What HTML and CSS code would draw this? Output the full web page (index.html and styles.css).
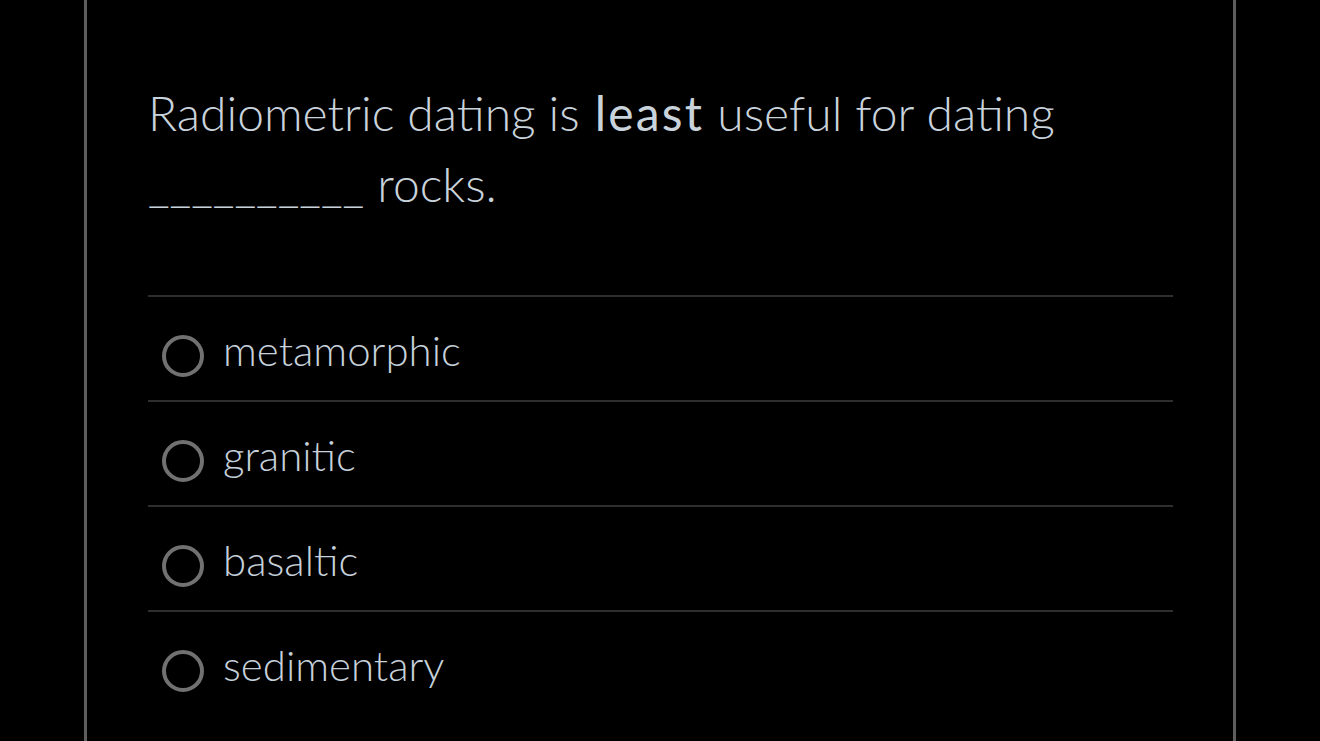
FILE: index.html
```html
<!DOCTYPE html>
<html>
<head>
<meta charset="utf-8">
<link rel="stylesheet" href="styles.css">
</head>
<body>
<div class="panel">
  <p class="question">Radiometric dating is <strong>least</strong> useful for dating __________ rocks.</p>
  <ul class="options">
    <li class="option"><span class="radio"></span><span class="label">metamorphic</span></li>
    <li class="option"><span class="radio"></span><span class="label">granitic</span></li>
    <li class="option"><span class="radio"></span><span class="label">basaltic</span></li>
    <li class="option"><span class="radio"></span><span class="label">sedimentary</span></li>
  </ul>
</div>
</body>
</html>
```
FILE: styles.css
```css
html, body {
  margin: 0;
  padding: 0;
  background: #000;
  height: 100%;
  overflow: hidden;
}
.panel {
  margin-left: 84px;
  width: 1152px;
  height: 741px;
  box-sizing: border-box;
  border-left: 3px solid #5e5e5e;
  border-right: 3px solid #5e5e5e;
  padding: 77px 61px 0;
  font-family: Lato, "Noto Sans", sans-serif;
  color: #c9d3dc;
}
.question {
  margin: 0;
  font-size: 48px;
  line-height: 71px;
  font-weight: 300;
}
.question strong {
  font-weight: 400;
  letter-spacing: 2.2px;
  margin-left: 2px;
}
.options {
  list-style: none;
  margin: 76px 0 0;
  padding: 0;
  width: 1025px;
}
.option {
  display: flex;
  align-items: center;
  height: 103px;
  border-top: 2px solid #2e2e2e;
  padding-left: 14px;
}
.radio {
  width: 34px;
  height: 34px;
  border: 4px solid #717171;
  border-radius: 50%;
  flex: none;
  margin-top: 14px;
}
.label {
  margin-left: 19px;
  font-size: 42px;
  font-weight: 300;
  margin-top: 2px;
  color: #c6d1db;
}
```
